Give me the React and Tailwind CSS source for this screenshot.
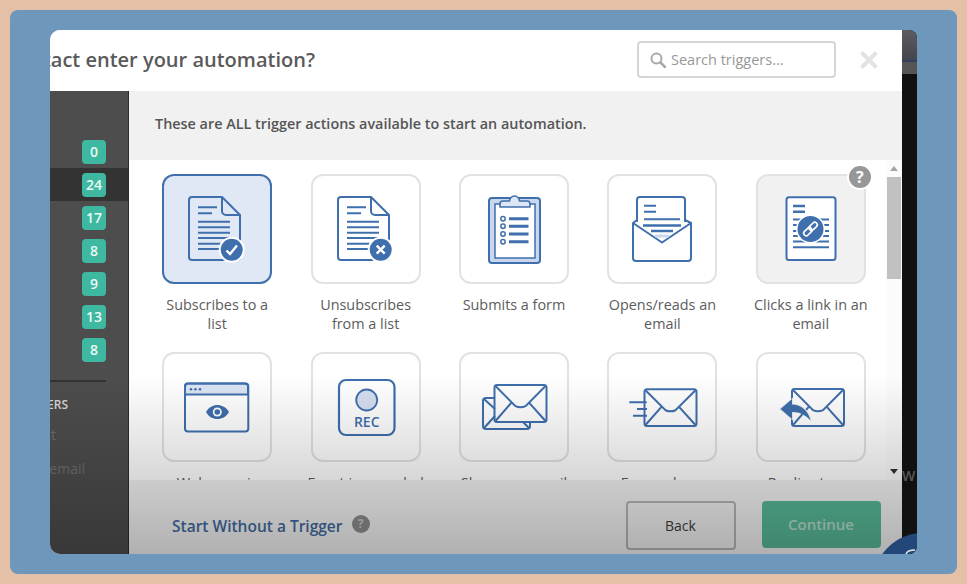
import React from "react";

const B = "#3f6fad";
const L = "#c9d8ee";

function DocBase({ children }) {
  return (
    <g fill="none" stroke={B} strokeWidth="2">
      <path d="M30 23H60L78 41V83a3 3 0 0 1-3 3H30a3 3 0 0 1-3-3V26a3 3 0 0 1 3-3Z" strokeLinejoin="round" />
      <path d="M60 23V37a4 4 0 0 0 4 4H78" strokeLinejoin="round" />
      <path d="M36 33.300H55M36 39.300H50M36 47.700H68M36 53.300H68M36 58.700H68M36 64H68M36 69.700H62M36 75H60" />
      {children}
    </g>
  );
}

function DocCheck() {
  return (
    <DocBase>
      <circle cx="69.700" cy="75.700" r="13" fill="#fff" stroke="none" />
      <circle cx="69.700" cy="75.700" r="11" fill={B} stroke="none" />
      <path d="M64.500 76.500L68 80L75 71.500" stroke="#fff" strokeWidth="2.400" />
    </DocBase>
  );
}

function DocX() {
  return (
    <DocBase>
      <circle cx="69.700" cy="75.700" r="13" fill="#fff" stroke="none" />
      <circle cx="69.700" cy="75.700" r="11" fill={B} stroke="none" />
      <path d="M65.700 71.700L73.700 79.700M73.700 71.700L65.700 79.700" stroke="#fff" strokeWidth="2.400" />
    </DocBase>
  );
}

function Clipboard() {
  return (
    <g fill="none" stroke={B} strokeWidth="2">
      <rect x="30" y="24" width="51" height="65" rx="3" fill={L} />
      <rect x="36" y="30" width="40" height="54" fill="#fff" strokeWidth="1.500" />
      <path d="M41 33V30a3 3 0 0 1 3-3h6.500a5 5 0 0 1 10 0H68a3 3 0 0 1 3 3v3Z" fill="#dde6f4" strokeLinejoin="round" strokeWidth="1.600" />
      <circle cx="44" cy="44.700" r="2.200" strokeWidth="1.500" />
      <circle cx="44" cy="52.300" r="2.200" strokeWidth="1.500" />
      <circle cx="44" cy="60" r="2.200" strokeWidth="1.500" />
      <circle cx="44" cy="67.700" r="2.200" strokeWidth="1.500" />
      <path d="M50 44.700H69.500M50 52.300H69.500M50 60H69.500M50 67.700H69.500" strokeWidth="3" />
    </g>
  );
}

function EmailOpen() {
  return (
    <g fill="none" stroke={B} strokeWidth="2" strokeLinejoin="round">
      <path d="M30 48V26a3 3 0 0 1 3-3H75a3 3 0 0 1 3 3V48" />
      <path d="M37 31.700H49M37 37.700H49M37 45.300H73" />
      <path d="M30 46L26 49V84a3 3 0 0 0 3 3H81a3 3 0 0 0 3-3V49L78 46" />
      <path d="M26 49L55 68.500L84 49" />
      <path d="M36 51.500H74M44 57H66" strokeWidth="2.500" />
      <path d="M48 62H62" stroke={L} strokeWidth="3" />
    </g>
  );
}

function Browser() {
  return (
    <g fill="none" stroke={B} strokeWidth="2">
      <path d="M26 31.500H83a3 3 0 0 1 3 3V42.500H23V34.500a3 3 0 0 1 3-3Z" fill="#dbe4f3" />
      <rect x="23" y="31.500" width="63.300" height="48" rx="3" />
      <circle cx="29" cy="37.300" r="1.300" fill={B} stroke="none" />
      <circle cx="33.400" cy="37.300" r="1.300" fill={B} stroke="none" />
      <circle cx="38" cy="37.300" r="1.300" fill={B} stroke="none" />
      <path d="M44 60C47 55 51 53 55.300 53S64 55 67 60C64 65 60 67 55.300 67S47 65 44 60Z" fill={B} stroke="none" />
      <circle cx="55.300" cy="60" r="4.500" fill="#fff" stroke="none" />
      <circle cx="55.300" cy="60" r="2.800" fill={B} stroke="none" />
    </g>
  );
}

function Rec() {
  return (
    <g>
      <rect x="28" y="28" width="55.500" height="55" rx="7" fill="none" stroke={B} strokeWidth="2.200" />
      <circle cx="55.700" cy="48" r="10.500" fill="#d5deef" stroke={B} strokeWidth="1.800" />
      <text x="55.700" y="74.500" textAnchor="middle" fontSize="14" fontWeight="600" fill={B} fontFamily="'Open Sans',sans-serif">REC</text>
    </g>
  );
}

function EnvelopeLines({ x, y, w, h }) {
  const r = x + w;
  const b = y + h;
  const mx = x + w / 2;
  return (
    <g>
      <rect x={x} y={y} width={w} height={h} rx="2.500" fill="none" />
      <path d={`M${x + 1} ${y + 1}L${mx - 5} ${y + h * 0.57}Q${mx} ${y + h * 0.63} ${mx + 5} ${y + h * 0.57}L${r - 1} ${y + 1}`} fill="none" />
      <path d={`M${x + 1} ${b - 1}L${x + w * 0.33} ${y + h * 0.47}M${r - 1} ${b - 1}L${x + w * 0.66} ${y + h * 0.47}`} fill="none" />
    </g>
  );
}

function Shares() {
  return (
    <g stroke={B} strokeWidth="2" fill="none">
      <path d="M35.500 46H27a3 3 0 0 0-3 3V74a3 3 0 0 0 3 3H68a3 3 0 0 0 3-3V70" />
      <path d="M25 47L36 57M25 76L36 64M70 76L64 70" />
      <EnvelopeLines x={35.500} y={33} w={52} h={37} />
    </g>
  );
}

function Forwards() {
  return (
    <g stroke={B} strokeWidth="2" fill="none">
      <EnvelopeLines x={37.500} y={37.300} w={52} h={36.700} />
      <path d="M22.300 50.300H39.700M30 57H40M26 63.700H40" />
    </g>
  );
}

function Replies() {
  return (
    <g stroke={B} strokeWidth="2" fill="none">
      <EnvelopeLines x={36} y={37} w={52} h={37} />
      <path d="M37 45.500L22.500 57L37 68.500V61C44 60 50 63 56 70C54 59 47 52 37 52Z" fill="#eeeeee" stroke="none" />
      <path d="M36 47L24.500 57L36 67V60C43 59.500 49 62.500 54.500 68.500C52.500 59.500 46 52.500 36 52.500Z" fill={B} stroke="none" />
    </g>
  );
}

function DocLink() {
  return (
    <g>
      <rect x="30.500" y="23.300" width="49" height="62.700" rx="2.500" fill="#fff" stroke={B} strokeWidth="2" />
      <path d="M37 32H49M37 37.700H49" stroke={B} strokeWidth="2.500" />
      <path d="M37 45.500H73M37 51H42M67 51H73M37 57H41M69 57H73M37 62H42M67 62H73M37 67.500H73M37 73.300H73" stroke={B} strokeWidth="2" />
      <circle cx="54.500" cy="55" r="14.500" fill="#fff" />
      <circle cx="54.500" cy="55" r="13" fill={B} />
      <g fill="none" stroke="#fff" strokeWidth="1.700" transform="rotate(-45 54.500 55)">
        <rect x="46" y="52.500" width="9.500" height="5" rx="2.500" />
        <rect x="53.500" y="52.500" width="9.500" height="5" rx="2.500" />
      </g>
    </g>
  );
}

const items = [
  { label: "Subscribes to a list", Icon: DocCheck, selected: true },
  { label: "Unsubscribes from a list", Icon: DocX },
  { label: "Submits a form", Icon: Clipboard },
  { label: "Opens/reads an email", Icon: EmailOpen },
  { label: "Clicks a link in an email", Icon: DocLink, hovered: true },
  { label: "Web page is visited", Icon: Browser },
  { label: "Event is recorded", Icon: Rec },
  { label: "Shares an email", Icon: Shares },
  { label: "Forwards an email", Icon: Forwards },
  { label: "Replies to an email", Icon: Replies },
];

const counts = ["0", "24", "17", "8", "9", "13", "8"];

function Card({ item }) {
  const { Icon, label, selected, hovered } = item;
  const look = selected
    ? "bg-[#e0e8f5] border-[#3f6fad]"
    : hovered
      ? "bg-[#f1f1f2] border-[#e2e2e2]"
      : "bg-transparent border-[#e2e2e2]";
  return (
    <div className="flex h-[178px] flex-col items-center">
      <div className={`relative h-[110px] w-[110px] rounded-[12px] border-2 ${look}`}>
        <svg viewBox="2 2 106 106" className="block h-[106px] w-[106px]">
          <Icon />
        </svg>
        {hovered && (
          <div className="absolute -right-[9px] -top-[12px] flex h-[26px] w-[26px] items-center justify-center rounded-full border-2 border-white bg-[#979797] text-[16px] font-bold text-white">
            ?
          </div>
        )}
      </div>
      <div className="mt-[11px] w-[118px] text-center text-[14.400px] leading-[19px] text-[#5c5c5c]">{label}</div>
    </div>
  );
}

export default function App() {
  return (
    <div className="h-[584px] w-[967px] bg-[#e4c0a6] p-[10px] font-['Open_Sans',sans-serif]">
      <div className="h-[564px] rounded-[8px] bg-[#6d98bc] px-[40px] py-[20px]">
        <div className="relative flex h-[524px] overflow-hidden rounded-l-[10px] rounded-r-[8px]">
          <div className="relative flex h-[524px] w-[852px] shrink-0 flex-col overflow-hidden bg-white">
            <div className="flex h-[61px] shrink-0 items-center bg-white pb-[2px]">
              <div className="flex w-[265px] shrink-0 justify-end">
                <span className="whitespace-nowrap text-[20px] font-[560] text-[#5a5a5a]">What makes a contact enter your automation?</span>
              </div>
              <div className="ml-[322px] flex h-[37px] w-[199px] items-center rounded-[4px] border-2 border-[#d6d6d6] pl-[11px]">
                <svg width="16" height="16" viewBox="0 0 16 16" fill="none" stroke="#a9a9a9" strokeWidth="2">
                  <circle cx="6.500" cy="6.500" r="5" />
                  <path d="M10.500 10.500L15 15" strokeWidth="2.500" strokeLinecap="round" />
                </svg>
                <span className="ml-[5px] text-[14.500px] text-[#989898]">Search triggers...</span>
              </div>
              <svg className="ml-[24px]" width="18" height="18" viewBox="0 0 18 18" stroke="#e3e3e3" strokeWidth="4">
                <path d="M1.500 1.500L16.500 16.500M16.500 1.500L1.500 16.500" />
              </svg>
            </div>
            <div className="flex min-h-0 flex-1">
              <div className="flex w-[79px] shrink-0 flex-col overflow-hidden border-r border-[#2b2b2b] bg-[#4d4d4d] pt-[44px]">
                {counts.map((c, i) => (
                  <div key={i} className={`flex h-[33px] shrink-0 items-center pl-[32px] ${i === 1 ? "bg-[#333333]" : ""}`}>
                    <span className="flex h-[24px] w-[24px] items-center justify-center rounded-[4px] bg-[#3fb8a1] text-[14px] font-semibold text-[#eef8f5]">{c}</span>
                  </div>
                ))}
                <div className="mt-[14px] h-[2px] w-[56px] shrink-0 bg-[#333333]"></div>
                <div className="mt-[15px] flex w-[18px] justify-end text-[12px] font-semibold leading-[16px] text-[#d8d8d8]">
                  <span className="whitespace-nowrap">TRIGGERS</span>
                </div>
                <div className="mt-[12px] flex w-[6px] justify-end text-[14px] leading-[19px] text-[#6f6f6f]">
                  <span className="whitespace-nowrap">Contact</span>
                </div>
                <div className="mt-[15px] flex w-[35px] justify-end text-[14px] leading-[19px] text-[#6f6f6f]">
                  <span className="whitespace-nowrap">Sent email</span>
                </div>
              </div>
              <div className="flex min-w-0 flex-1 flex-col">
                <div className="flex h-[69px] shrink-0 items-center bg-[#f1f1f1] pb-[4px] pl-[26px] text-[14.400px] font-semibold text-[#555555]">
                  These are ALL trigger actions available to start an automation.
                </div>
                <div className="flex h-[320px] shrink-0 overflow-hidden bg-white">
                  <div className="w-[757px] shrink-0 overflow-hidden pl-[14px] pt-[14px]">
                    <div className="grid w-[742px] grid-cols-5">
                      {items.map((it) => (
                        <Card key={it.label} item={it} />
                      ))}
                    </div>
                  </div>
                  <div className="flex w-[16px] shrink-0 flex-col items-center bg-[#fbfbfb] pt-[6px]">
                    <div className="h-0 w-0 border-x-[4px] border-b-[5px] border-x-transparent border-b-[#a5a5a5]"></div>
                    <div className="mt-[6px] h-[102px] w-[14px] bg-[#c1c1c1]"></div>
                    <div className="mt-[190px] h-0 w-0 border-x-[4px] border-t-[5px] border-x-transparent border-t-[#333333]"></div>
                  </div>
                </div>
                <div className="flex flex-1 items-start bg-[#f2f2f2] pl-[43px]">
                  <span className="mt-[34px] text-[15.500px] font-semibold leading-[24px] text-[#3f6a9e]">Start Without a Trigger</span>
                  <span className="ml-[9px] mt-[35px] flex h-[18px] w-[18px] items-center justify-center rounded-full bg-[#8c8c8c] text-[12px] font-bold text-[#c8c8c8]">?</span>
                  <button className="ml-[256px] mt-[21px] h-[49px] w-[110px] rounded-[4px] border-2 border-[#b4b4b4] bg-[#f0f0f0] text-[14px] font-medium text-[#3c3c3c]">Back</button>
                  <button className="ml-[26px] mt-[21px] h-[47px] w-[119px] rounded-[4px] bg-[#56b896] text-[15px] font-semibold text-[#b8dccd]">Continue</button>
                </div>
              </div>
            </div>
            <div className="pointer-events-none absolute inset-x-0 bottom-0 h-[179px] bg-gradient-to-b from-transparent to-black/[0.27]"></div>
          </div>
          <div className="flex w-[15px] shrink-0 flex-col bg-[#111111]">
            <div className="h-[30px] shrink-0 bg-gradient-to-b from-[#5c5c62] to-[#45454c]"></div>
            <div className="h-[2px] shrink-0 bg-[#34405c]"></div>
            <div className="h-[12px] shrink-0 bg-[#555555]"></div>
            <div className="mt-[392px] text-[14px] font-semibold leading-[19px] text-[#5a5a5a]">W</div>
          </div>
          <div className="absolute -bottom-[79px] -right-[56px] h-[100px] w-[100px] rounded-full bg-[#24477a]"></div>
          <svg className="absolute bottom-0 right-0" width="12" height="5" viewBox="0 0 12 5" fill="none" stroke="#e8e8e8" strokeWidth="1.500">
            <path d="M1 5C2 2.500 5 1 10 1" />
          </svg>
        </div>
      </div>
    </div>
  );
}
